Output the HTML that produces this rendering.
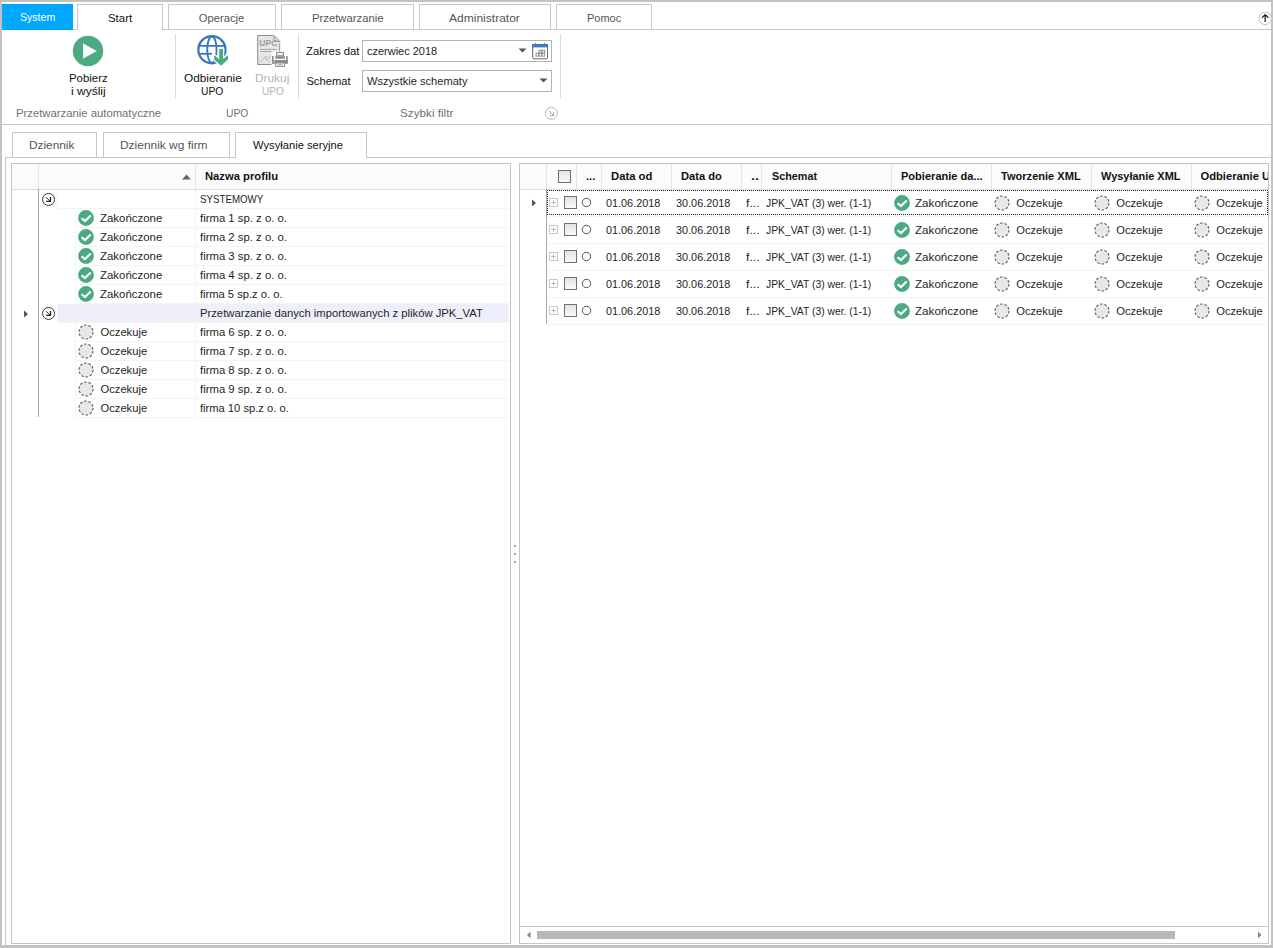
<!DOCTYPE html>
<html><head><meta charset="utf-8"><style>
html,body{margin:0;padding:0;width:1273px;height:948px;overflow:hidden;background:#c3c3c3;font-family:'Liberation Sans', sans-serif;}
svg{overflow:visible}
</style></head><body>
<div style="position:absolute;left:2px;top:2px;width:1269px;height:943px;background:#fff"></div><div style="position:absolute;left:2px;top:29px;width:1269px;height:1px;background:#c8c8c8"></div><div style="position:absolute;left:2px;top:4px;width:71px;height:26px;background:#00a8ff"></div><div style="position:absolute;left:77px;top:4px;width:84px;height:25px;border:1px solid #c8c8c8;border-bottom:none;background:#fff"></div><div style="position:absolute;left:168px;top:4px;width:106px;height:24px;border:1px solid #c8c8c8;border-bottom:none;background:#fff"></div><div style="position:absolute;left:281px;top:4px;width:131px;height:24px;border:1px solid #c8c8c8;border-bottom:none;background:#fff"></div><div style="position:absolute;left:419px;top:4px;width:130px;height:24px;border:1px solid #c8c8c8;border-bottom:none;background:#fff"></div><div style="position:absolute;left:556px;top:4px;width:94px;height:24px;border:1px solid #c8c8c8;border-bottom:none;background:#fff"></div><div style="position:absolute;left:2px;top:124px;width:1269px;height:1px;background:#c8c8c8"></div><div style="position:absolute;left:175px;top:34px;width:1px;height:65px;background:#dcdcdc"></div><div style="position:absolute;left:298px;top:34px;width:1px;height:65px;background:#dcdcdc"></div><div style="position:absolute;left:560px;top:34px;width:1px;height:65px;background:#dcdcdc"></div><svg style="position:absolute;left:72px;top:35px" width="32" height="32" viewBox="0 0 32 32"><circle cx="16" cy="16" r="15.2" fill="#4caa82"/><path d="M11 8.3 L24.8 16 L11 23.8 Z" fill="#f7f8fd"/></svg><svg style="position:absolute;left:195px;top:33px" width="36" height="36" viewBox="0 0 36 36"><g fill="none" stroke="#3a78be">
<circle cx="16.9" cy="16.7" r="13.55" stroke-width="2.3"/>
<ellipse cx="16.9" cy="16.7" rx="4.7" ry="13.2" stroke-width="1.9"/>
<line x1="4.5" y1="12.86" x2="29.5" y2="12.86" stroke-width="1.8"/><line x1="4.5" y1="20.83" x2="17" y2="20.83" stroke-width="1.8"/>
</g>
<path d="M24.2 15.9 L28 15.9 L28 26.3 L33 22 L33 26.6 L26.1 32.8 L19.1 26.6 L19.1 22 L24.2 26.3 Z" fill="#fff" stroke="#fff" stroke-width="2.6" stroke-linejoin="round"/>
<path d="M24.2 15.9 L28 15.9 L28 26.3 L33 22 L33 26.6 L26.1 32.8 L19.1 26.6 L19.1 22 L24.2 26.3 Z" fill="#4caa82"/></svg><svg style="position:absolute;left:255px;top:33px" width="36" height="36" viewBox="0 0 36 36"><path d="M2.7 2.5 L19 2.5 L24.7 8.4 L24.7 31.5 L2.7 31.5 Z" fill="#e6e6e6" stroke="#8c8c8c" stroke-width="1"/>
<text x="4.2" y="13.4" font-family="Liberation Sans" font-size="8.6" font-weight="bold" fill="#9c9c9c">UPO</text>
<path d="M19 2.5 L19 8.4 L24.7 8.4 L24.7 11 L18 11 L18 2.5 Z" fill="#e6e6e6"/>
<path d="M19 2.5 L19 8.4 L24.7 8.4" fill="none" stroke="#8c8c8c" stroke-width="1"/>
<line x1="5.2" y1="16.4" x2="21.4" y2="16.4" stroke="#a0a0a0" stroke-width="0.9"/><line x1="5.2" y1="18.5" x2="16.8" y2="18.5" stroke="#a0a0a0" stroke-width="0.9"/>
<path d="M4.6 29.4 Q8 26 11.5 23 Q9 27 12 26.5 Q14 25.5 15.5 22.5" fill="none" stroke="#b0b0b0" stroke-width="0.9"/>
<path d="M12 27.5 Q14 28.5 15.5 29" fill="none" stroke="#c0c0c0" stroke-width="0.8"/>
<rect x="16.5" y="18.3" width="18.5" height="16.5" fill="#fff"/>
<rect x="21.6" y="19.4" width="6.9" height="3.3" fill="#efefef" stroke="#8c8c8c" stroke-width="1"/>
<rect x="20.2" y="23.2" width="9.7" height="2.5" fill="#8c8c8c"/>
<rect x="17" y="23" width="1.6" height="7.7" fill="#8c8c8c"/><rect x="31.1" y="23" width="1.6" height="7.7" fill="#8c8c8c"/>
<rect x="17" y="27" width="15.7" height="3.7" fill="#8c8c8c"/>
<rect x="18.2" y="28.3" width="1.6" height="1" fill="#fff"/>
<rect x="20.7" y="30" width="8.7" height="3.4" fill="#fff" stroke="#8c8c8c" stroke-width="1"/>
<line x1="22.5" y1="31.8" x2="27.6" y2="31.8" stroke="#8c8c8c" stroke-width="0.8"/></svg><div style="position:absolute;left:362px;top:40px;width:188px;height:20px;border:1px solid #b4b4b4;background:#fff"></div><div style="position:absolute;left:362px;top:70px;width:188px;height:20px;border:1px solid #b4b4b4;background:#fff"></div><svg style="position:absolute;left:518px;top:48px" width="9" height="5" viewBox="0 0 9 5"><path d="M0.5 0.5 L8.5 0.5 L4.5 4.5 Z" fill="#555"/></svg><svg style="position:absolute;left:539px;top:78px" width="9" height="5" viewBox="0 0 9 5"><path d="M0.5 0.5 L8.5 0.5 L4.5 4.5 Z" fill="#555"/></svg><svg style="position:absolute;left:531px;top:42px" width="19" height="19" viewBox="0 0 19 19"><path d="M1.7 2.5 H16.5 V15.5 Q16.5 16.8 15.2 16.8 H3 Q1.7 16.8 1.7 15.5 Z" fill="#fff" stroke="#666" stroke-width="1"/>
<rect x="1.2" y="2" width="15.8" height="3.4" fill="#3d7cc1"/>
<rect x="4" y="1" width="1" height="3" fill="#777"/><rect x="13" y="1" width="1" height="3" fill="#777"/>
<g fill="none" stroke="#8a8a8a" stroke-width="0.9"><rect x="7.9" y="8.3" width="2.9" height="2.9"/><rect x="10.8" y="8.3" width="2.9" height="2.9"/>
<rect x="5" y="11.2" width="2.9" height="2.9"/><rect x="7.9" y="11.2" width="2.9" height="2.9"/><rect x="10.8" y="11.2" width="2.9" height="2.9"/></g></svg><svg style="position:absolute;left:544px;top:106px" width="15" height="15" viewBox="0 0 15 15"><circle cx="7.4" cy="7.3" r="6" fill="#fff" stroke="#b8b8b8" stroke-width="1"/><path d="M4.8 4.8 L9.6 9.6 M9.6 6.2 L9.6 9.6 L6.2 9.6" fill="none" stroke="#a0a0a0" stroke-width="1"/></svg><svg style="position:absolute;left:1257px;top:10px" width="15" height="16" viewBox="0 0 15 16"><circle cx="8.2" cy="8.4" r="6.2" fill="#fff" stroke="#c0c0c0" stroke-width="1"/><path d="M8.2 4.6 L8.2 12 M5 7.8 L8.2 4.6 L11.4 7.8" fill="none" stroke="#222" stroke-width="1.3"/></svg><div style="position:absolute;left:5px;top:157px;width:1266px;height:1px;background:#c6c6c6"></div><div style="position:absolute;left:5px;top:157px;width:1px;height:788px;background:#c6c6c6"></div><div style="position:absolute;left:12px;top:132px;width:83px;height:24px;border:1px solid #c6c6c6;border-bottom:none;background:#fff"></div><div style="position:absolute;left:103px;top:132px;width:125px;height:24px;border:1px solid #c6c6c6;border-bottom:none;background:#fff"></div><div style="position:absolute;left:235px;top:132px;width:130px;height:25px;border:1px solid #c6c6c6;border-bottom:none;background:#fff"></div><div style="position:absolute;left:11px;top:163px;width:498px;height:779px;border:1px solid #c4c4c4;background:#fff"></div><div style="position:absolute;left:12px;top:164px;width:498px;height:25px;background:#fbfbfb"></div><div style="position:absolute;left:12px;top:189px;width:498px;height:1px;background:#dcdcdc"></div><div style="position:absolute;left:38px;top:164px;width:1px;height:25px;background:#e4e4e4"></div><div style="position:absolute;left:195px;top:164px;width:1px;height:25px;background:#e4e4e4"></div><svg style="position:absolute;left:181px;top:173px" width="11" height="8" viewBox="0 0 11 8"><path d="M1 6.5 L5.5 1.5 L10 6.5 Z" fill="#666"/></svg><div style="position:absolute;left:38px;top:189px;width:1px;height:228px;background:#a8a8a8"></div><div style="position:absolute;left:57px;top:208px;width:452px;height:1px;background:#f4f4f4"></div><div style="position:absolute;left:57px;top:190px;width:1px;height:19px;background:#f4f4f4"></div><div style="position:absolute;left:195px;top:190px;width:1px;height:19px;background:#f4f4f4"></div><svg style="position:absolute;left:41px;top:193px" width="14" height="14" viewBox="0 0 14 14"><circle cx="7.55" cy="6.45" r="6" fill="#fff" stroke="#333" stroke-width="1"/><path d="M5.1 4.3 L9.4 8.6" fill="none" stroke="#222" stroke-width="1"/><path d="M5.2 8.4 H9.9 M9.5 4.1 V8.8" fill="none" stroke="#222" stroke-width="1.3"/></svg><div style="position:absolute;left:75px;top:209px;width:1px;height:19px;background:#f2f2f2"></div><div style="position:absolute;left:75px;top:227px;width:434px;height:1px;background:#f4f4f4"></div><div style="position:absolute;left:195px;top:209px;width:1px;height:19px;background:#f2f2f2"></div><svg style="position:absolute;left:78px;top:210px" width="16" height="16" viewBox="0 0 16 16"><circle cx="8" cy="8" r="7.9" fill="#4caa82"/><path d="M3.6 8.2 L7 11.1 L12.7 5.5" fill="none" stroke="#fff" stroke-width="2.1" stroke-linecap="butt" stroke-linejoin="miter"/></svg><div style="position:absolute;left:75px;top:228px;width:1px;height:19px;background:#f2f2f2"></div><div style="position:absolute;left:75px;top:246px;width:434px;height:1px;background:#f4f4f4"></div><div style="position:absolute;left:195px;top:228px;width:1px;height:19px;background:#f2f2f2"></div><svg style="position:absolute;left:78px;top:229px" width="16" height="16" viewBox="0 0 16 16"><circle cx="8" cy="8" r="7.9" fill="#4caa82"/><path d="M3.6 8.2 L7 11.1 L12.7 5.5" fill="none" stroke="#fff" stroke-width="2.1" stroke-linecap="butt" stroke-linejoin="miter"/></svg><div style="position:absolute;left:75px;top:247px;width:1px;height:19px;background:#f2f2f2"></div><div style="position:absolute;left:75px;top:265px;width:434px;height:1px;background:#f4f4f4"></div><div style="position:absolute;left:195px;top:247px;width:1px;height:19px;background:#f2f2f2"></div><svg style="position:absolute;left:78px;top:248px" width="16" height="16" viewBox="0 0 16 16"><circle cx="8" cy="8" r="7.9" fill="#4caa82"/><path d="M3.6 8.2 L7 11.1 L12.7 5.5" fill="none" stroke="#fff" stroke-width="2.1" stroke-linecap="butt" stroke-linejoin="miter"/></svg><div style="position:absolute;left:75px;top:266px;width:1px;height:19px;background:#f2f2f2"></div><div style="position:absolute;left:75px;top:284px;width:434px;height:1px;background:#f4f4f4"></div><div style="position:absolute;left:195px;top:266px;width:1px;height:19px;background:#f2f2f2"></div><svg style="position:absolute;left:78px;top:267px" width="16" height="16" viewBox="0 0 16 16"><circle cx="8" cy="8" r="7.9" fill="#4caa82"/><path d="M3.6 8.2 L7 11.1 L12.7 5.5" fill="none" stroke="#fff" stroke-width="2.1" stroke-linecap="butt" stroke-linejoin="miter"/></svg><div style="position:absolute;left:75px;top:285px;width:1px;height:19px;background:#f2f2f2"></div><div style="position:absolute;left:75px;top:303px;width:434px;height:1px;background:#f4f4f4"></div><div style="position:absolute;left:195px;top:285px;width:1px;height:19px;background:#f2f2f2"></div><svg style="position:absolute;left:78px;top:286px" width="16" height="16" viewBox="0 0 16 16"><circle cx="8" cy="8" r="7.9" fill="#4caa82"/><path d="M3.6 8.2 L7 11.1 L12.7 5.5" fill="none" stroke="#fff" stroke-width="2.1" stroke-linecap="butt" stroke-linejoin="miter"/></svg><div style="position:absolute;left:57px;top:304px;width:452px;height:19px;background:#efeffc"></div><svg style="position:absolute;left:22px;top:310px" width="8" height="9" viewBox="0 0 8 9"><path d="M2 0.5 L6 4 L2 7.5 Z" fill="#555"/></svg><div style="position:absolute;left:57px;top:322px;width:452px;height:1px;background:#f4f4f4"></div><div style="position:absolute;left:57px;top:304px;width:1px;height:19px;background:#f4f4f4"></div><div style="position:absolute;left:195px;top:304px;width:1px;height:19px;background:#f4f4f4"></div><svg style="position:absolute;left:41px;top:307px" width="14" height="14" viewBox="0 0 14 14"><circle cx="7.55" cy="6.45" r="6" fill="#fff" stroke="#333" stroke-width="1"/><path d="M5.1 4.3 L9.4 8.6" fill="none" stroke="#222" stroke-width="1"/><path d="M5.2 8.4 H9.9 M9.5 4.1 V8.8" fill="none" stroke="#222" stroke-width="1.3"/></svg><div style="position:absolute;left:75px;top:323px;width:1px;height:19px;background:#f2f2f2"></div><div style="position:absolute;left:75px;top:341px;width:434px;height:1px;background:#f4f4f4"></div><div style="position:absolute;left:195px;top:323px;width:1px;height:19px;background:#f2f2f2"></div><svg style="position:absolute;left:78px;top:324px" width="16" height="16" viewBox="0 0 16 16"><circle cx="8" cy="8" r="7" fill="#e8e8e8" stroke="#5a5a5a" stroke-width="1.1" stroke-dasharray="2.6 1.8"/></svg><div style="position:absolute;left:75px;top:342px;width:1px;height:19px;background:#f2f2f2"></div><div style="position:absolute;left:75px;top:360px;width:434px;height:1px;background:#f4f4f4"></div><div style="position:absolute;left:195px;top:342px;width:1px;height:19px;background:#f2f2f2"></div><svg style="position:absolute;left:78px;top:343px" width="16" height="16" viewBox="0 0 16 16"><circle cx="8" cy="8" r="7" fill="#e8e8e8" stroke="#5a5a5a" stroke-width="1.1" stroke-dasharray="2.6 1.8"/></svg><div style="position:absolute;left:75px;top:361px;width:1px;height:19px;background:#f2f2f2"></div><div style="position:absolute;left:75px;top:379px;width:434px;height:1px;background:#f4f4f4"></div><div style="position:absolute;left:195px;top:361px;width:1px;height:19px;background:#f2f2f2"></div><svg style="position:absolute;left:78px;top:362px" width="16" height="16" viewBox="0 0 16 16"><circle cx="8" cy="8" r="7" fill="#e8e8e8" stroke="#5a5a5a" stroke-width="1.1" stroke-dasharray="2.6 1.8"/></svg><div style="position:absolute;left:75px;top:380px;width:1px;height:19px;background:#f2f2f2"></div><div style="position:absolute;left:75px;top:398px;width:434px;height:1px;background:#f4f4f4"></div><div style="position:absolute;left:195px;top:380px;width:1px;height:19px;background:#f2f2f2"></div><svg style="position:absolute;left:78px;top:381px" width="16" height="16" viewBox="0 0 16 16"><circle cx="8" cy="8" r="7" fill="#e8e8e8" stroke="#5a5a5a" stroke-width="1.1" stroke-dasharray="2.6 1.8"/></svg><div style="position:absolute;left:75px;top:399px;width:1px;height:19px;background:#f2f2f2"></div><div style="position:absolute;left:75px;top:417px;width:434px;height:1px;background:#f4f4f4"></div><div style="position:absolute;left:195px;top:399px;width:1px;height:19px;background:#f2f2f2"></div><svg style="position:absolute;left:78px;top:400px" width="16" height="16" viewBox="0 0 16 16"><circle cx="8" cy="8" r="7" fill="#e8e8e8" stroke="#5a5a5a" stroke-width="1.1" stroke-dasharray="2.6 1.8"/></svg><div style="position:absolute;left:519px;top:163px;width:748px;height:779px;border:1px solid #c4c4c4;background:#fff"></div><div style="position:absolute;left:520px;top:164px;width:748px;height:25px;background:#fbfbfb"></div><div style="position:absolute;left:520px;top:189px;width:748px;height:1px;background:#dcdcdc"></div><div style="position:absolute;left:546px;top:164px;width:1px;height:25px;background:#e4e4e4"></div><div style="position:absolute;left:576px;top:164px;width:1px;height:25px;background:#e4e4e4"></div><div style="position:absolute;left:601px;top:164px;width:1px;height:25px;background:#e4e4e4"></div><div style="position:absolute;left:671px;top:164px;width:1px;height:25px;background:#e4e4e4"></div><div style="position:absolute;left:741px;top:164px;width:1px;height:25px;background:#e4e4e4"></div><div style="position:absolute;left:761px;top:164px;width:1px;height:25px;background:#e4e4e4"></div><div style="position:absolute;left:891px;top:164px;width:1px;height:25px;background:#e4e4e4"></div><div style="position:absolute;left:991px;top:164px;width:1px;height:25px;background:#e4e4e4"></div><div style="position:absolute;left:1091px;top:164px;width:1px;height:25px;background:#e4e4e4"></div><div style="position:absolute;left:1191px;top:164px;width:1px;height:25px;background:#e4e4e4"></div><svg style="position:absolute;left:557px;top:169px" width="15" height="15" viewBox="0 0 15 15"><defs><linearGradient id="cg" x1="0" y1="0" x2="0" y2="1"><stop offset="0" stop-color="#e2e2e2"/><stop offset="1" stop-color="#fafafa"/></linearGradient></defs><rect x="1.5" y="1.5" width="12" height="12" fill="url(#cg)" stroke="#707070" stroke-width="1"/></svg><div style="position:absolute;left:546px;top:189px;width:1px;height:135px;background:#a8a8a8"></div><div style="position:absolute;left:547px;top:216px;width:721px;height:1px;background:#f4f4f4"></div><svg style="position:absolute;left:530px;top:199px" width="8" height="9" viewBox="0 0 8 9"><path d="M2 0.5 L6 4 L2 7.5 Z" fill="#555"/></svg><svg style="position:absolute;left:548px;top:197px" width="11" height="11" viewBox="0 0 11 11"><rect x="1.5" y="1.5" width="8" height="8" fill="#fff" stroke="#c8c8c8" stroke-width="1"/><path d="M5.5 3.3 V7.7 M3.3 5.5 H7.7" stroke="#b8b8b8" stroke-width="1"/></svg><svg style="position:absolute;left:563px;top:195px" width="15" height="15" viewBox="0 0 15 15"><rect x="1.5" y="1.5" width="12" height="12" fill="url(#cg)" stroke="#707070" stroke-width="1"/></svg><svg style="position:absolute;left:581px;top:197px" width="11" height="11" viewBox="0 0 11 11"><circle cx="5.5" cy="5.5" r="4.2" fill="#fff" stroke="#555" stroke-width="1"/></svg><svg style="position:absolute;left:894px;top:195px" width="16" height="16" viewBox="0 0 16 16"><circle cx="8" cy="8" r="7.9" fill="#4caa82"/><path d="M3.6 8.2 L7 11.1 L12.7 5.5" fill="none" stroke="#fff" stroke-width="2.1" stroke-linecap="butt" stroke-linejoin="miter"/></svg><svg style="position:absolute;left:994px;top:195px" width="16" height="16" viewBox="0 0 16 16"><circle cx="8" cy="8" r="7" fill="#e8e8e8" stroke="#5a5a5a" stroke-width="1.1" stroke-dasharray="2.6 1.8"/></svg><svg style="position:absolute;left:1094px;top:195px" width="16" height="16" viewBox="0 0 16 16"><circle cx="8" cy="8" r="7" fill="#e8e8e8" stroke="#5a5a5a" stroke-width="1.1" stroke-dasharray="2.6 1.8"/></svg><svg style="position:absolute;left:1194px;top:195px" width="16" height="16" viewBox="0 0 16 16"><circle cx="8" cy="8" r="7" fill="#e8e8e8" stroke="#5a5a5a" stroke-width="1.1" stroke-dasharray="2.6 1.8"/></svg><div style="position:absolute;left:547px;top:243px;width:721px;height:1px;background:#f4f4f4"></div><svg style="position:absolute;left:548px;top:224px" width="11" height="11" viewBox="0 0 11 11"><rect x="1.5" y="1.5" width="8" height="8" fill="#fff" stroke="#c8c8c8" stroke-width="1"/><path d="M5.5 3.3 V7.7 M3.3 5.5 H7.7" stroke="#b8b8b8" stroke-width="1"/></svg><svg style="position:absolute;left:563px;top:222px" width="15" height="15" viewBox="0 0 15 15"><rect x="1.5" y="1.5" width="12" height="12" fill="url(#cg)" stroke="#707070" stroke-width="1"/></svg><svg style="position:absolute;left:581px;top:224px" width="11" height="11" viewBox="0 0 11 11"><circle cx="5.5" cy="5.5" r="4.2" fill="#fff" stroke="#555" stroke-width="1"/></svg><svg style="position:absolute;left:894px;top:222px" width="16" height="16" viewBox="0 0 16 16"><circle cx="8" cy="8" r="7.9" fill="#4caa82"/><path d="M3.6 8.2 L7 11.1 L12.7 5.5" fill="none" stroke="#fff" stroke-width="2.1" stroke-linecap="butt" stroke-linejoin="miter"/></svg><svg style="position:absolute;left:994px;top:222px" width="16" height="16" viewBox="0 0 16 16"><circle cx="8" cy="8" r="7" fill="#e8e8e8" stroke="#5a5a5a" stroke-width="1.1" stroke-dasharray="2.6 1.8"/></svg><svg style="position:absolute;left:1094px;top:222px" width="16" height="16" viewBox="0 0 16 16"><circle cx="8" cy="8" r="7" fill="#e8e8e8" stroke="#5a5a5a" stroke-width="1.1" stroke-dasharray="2.6 1.8"/></svg><svg style="position:absolute;left:1194px;top:222px" width="16" height="16" viewBox="0 0 16 16"><circle cx="8" cy="8" r="7" fill="#e8e8e8" stroke="#5a5a5a" stroke-width="1.1" stroke-dasharray="2.6 1.8"/></svg><div style="position:absolute;left:547px;top:270px;width:721px;height:1px;background:#f4f4f4"></div><svg style="position:absolute;left:548px;top:251px" width="11" height="11" viewBox="0 0 11 11"><rect x="1.5" y="1.5" width="8" height="8" fill="#fff" stroke="#c8c8c8" stroke-width="1"/><path d="M5.5 3.3 V7.7 M3.3 5.5 H7.7" stroke="#b8b8b8" stroke-width="1"/></svg><svg style="position:absolute;left:563px;top:249px" width="15" height="15" viewBox="0 0 15 15"><rect x="1.5" y="1.5" width="12" height="12" fill="url(#cg)" stroke="#707070" stroke-width="1"/></svg><svg style="position:absolute;left:581px;top:251px" width="11" height="11" viewBox="0 0 11 11"><circle cx="5.5" cy="5.5" r="4.2" fill="#fff" stroke="#555" stroke-width="1"/></svg><svg style="position:absolute;left:894px;top:249px" width="16" height="16" viewBox="0 0 16 16"><circle cx="8" cy="8" r="7.9" fill="#4caa82"/><path d="M3.6 8.2 L7 11.1 L12.7 5.5" fill="none" stroke="#fff" stroke-width="2.1" stroke-linecap="butt" stroke-linejoin="miter"/></svg><svg style="position:absolute;left:994px;top:249px" width="16" height="16" viewBox="0 0 16 16"><circle cx="8" cy="8" r="7" fill="#e8e8e8" stroke="#5a5a5a" stroke-width="1.1" stroke-dasharray="2.6 1.8"/></svg><svg style="position:absolute;left:1094px;top:249px" width="16" height="16" viewBox="0 0 16 16"><circle cx="8" cy="8" r="7" fill="#e8e8e8" stroke="#5a5a5a" stroke-width="1.1" stroke-dasharray="2.6 1.8"/></svg><svg style="position:absolute;left:1194px;top:249px" width="16" height="16" viewBox="0 0 16 16"><circle cx="8" cy="8" r="7" fill="#e8e8e8" stroke="#5a5a5a" stroke-width="1.1" stroke-dasharray="2.6 1.8"/></svg><div style="position:absolute;left:547px;top:297px;width:721px;height:1px;background:#f4f4f4"></div><svg style="position:absolute;left:548px;top:278px" width="11" height="11" viewBox="0 0 11 11"><rect x="1.5" y="1.5" width="8" height="8" fill="#fff" stroke="#c8c8c8" stroke-width="1"/><path d="M5.5 3.3 V7.7 M3.3 5.5 H7.7" stroke="#b8b8b8" stroke-width="1"/></svg><svg style="position:absolute;left:563px;top:276px" width="15" height="15" viewBox="0 0 15 15"><rect x="1.5" y="1.5" width="12" height="12" fill="url(#cg)" stroke="#707070" stroke-width="1"/></svg><svg style="position:absolute;left:581px;top:278px" width="11" height="11" viewBox="0 0 11 11"><circle cx="5.5" cy="5.5" r="4.2" fill="#fff" stroke="#555" stroke-width="1"/></svg><svg style="position:absolute;left:894px;top:276px" width="16" height="16" viewBox="0 0 16 16"><circle cx="8" cy="8" r="7.9" fill="#4caa82"/><path d="M3.6 8.2 L7 11.1 L12.7 5.5" fill="none" stroke="#fff" stroke-width="2.1" stroke-linecap="butt" stroke-linejoin="miter"/></svg><svg style="position:absolute;left:994px;top:276px" width="16" height="16" viewBox="0 0 16 16"><circle cx="8" cy="8" r="7" fill="#e8e8e8" stroke="#5a5a5a" stroke-width="1.1" stroke-dasharray="2.6 1.8"/></svg><svg style="position:absolute;left:1094px;top:276px" width="16" height="16" viewBox="0 0 16 16"><circle cx="8" cy="8" r="7" fill="#e8e8e8" stroke="#5a5a5a" stroke-width="1.1" stroke-dasharray="2.6 1.8"/></svg><svg style="position:absolute;left:1194px;top:276px" width="16" height="16" viewBox="0 0 16 16"><circle cx="8" cy="8" r="7" fill="#e8e8e8" stroke="#5a5a5a" stroke-width="1.1" stroke-dasharray="2.6 1.8"/></svg><div style="position:absolute;left:547px;top:324px;width:721px;height:1px;background:#f4f4f4"></div><svg style="position:absolute;left:548px;top:305px" width="11" height="11" viewBox="0 0 11 11"><rect x="1.5" y="1.5" width="8" height="8" fill="#fff" stroke="#c8c8c8" stroke-width="1"/><path d="M5.5 3.3 V7.7 M3.3 5.5 H7.7" stroke="#b8b8b8" stroke-width="1"/></svg><svg style="position:absolute;left:563px;top:303px" width="15" height="15" viewBox="0 0 15 15"><rect x="1.5" y="1.5" width="12" height="12" fill="url(#cg)" stroke="#707070" stroke-width="1"/></svg><svg style="position:absolute;left:581px;top:305px" width="11" height="11" viewBox="0 0 11 11"><circle cx="5.5" cy="5.5" r="4.2" fill="#fff" stroke="#555" stroke-width="1"/></svg><svg style="position:absolute;left:894px;top:303px" width="16" height="16" viewBox="0 0 16 16"><circle cx="8" cy="8" r="7.9" fill="#4caa82"/><path d="M3.6 8.2 L7 11.1 L12.7 5.5" fill="none" stroke="#fff" stroke-width="2.1" stroke-linecap="butt" stroke-linejoin="miter"/></svg><svg style="position:absolute;left:994px;top:303px" width="16" height="16" viewBox="0 0 16 16"><circle cx="8" cy="8" r="7" fill="#e8e8e8" stroke="#5a5a5a" stroke-width="1.1" stroke-dasharray="2.6 1.8"/></svg><svg style="position:absolute;left:1094px;top:303px" width="16" height="16" viewBox="0 0 16 16"><circle cx="8" cy="8" r="7" fill="#e8e8e8" stroke="#5a5a5a" stroke-width="1.1" stroke-dasharray="2.6 1.8"/></svg><svg style="position:absolute;left:1194px;top:303px" width="16" height="16" viewBox="0 0 16 16"><circle cx="8" cy="8" r="7" fill="#e8e8e8" stroke="#5a5a5a" stroke-width="1.1" stroke-dasharray="2.6 1.8"/></svg><div style="position:absolute;left:547px;top:190px;width:721px;height:25px;border:1px dotted #222;box-sizing:border-box"></div><div style="position:absolute;left:520px;top:926px;width:748px;height:1px;background:#c8c8c8"></div><div style="position:absolute;left:537px;top:931px;width:638px;height:8px;background:#b8b8b8"></div><svg style="position:absolute;left:526px;top:931px" width="6" height="8" viewBox="0 0 6 8"><path d="M4.5 0.5 L1 4 L4.5 7.5 Z" fill="#888"/></svg><svg style="position:absolute;left:1257px;top:931px" width="6" height="8" viewBox="0 0 6 8"><path d="M1 0.5 L4.5 4 L1 7.5 Z" fill="#888"/></svg><div style="position:absolute;left:510px;top:157px;width:1px;height:788px;background:transparent"></div><div style="position:absolute;left:514px;top:545px;width:2px;height:2px;background:#a0a0a0"></div><div style="position:absolute;left:514px;top:553px;width:2px;height:2px;background:#a0a0a0"></div><div style="position:absolute;left:514px;top:561px;width:2px;height:2px;background:#a0a0a0"></div>
<div style="position:absolute;left:19.70px;top:12.00px;font-size:11.2px;font-weight:400;color:#ffffff;line-height:1;white-space:pre;transform-origin:0 0;transform:scaleX(0.9446);">System</div><div style="position:absolute;left:108.10px;top:13.00px;font-size:11.2px;font-weight:400;color:#111;line-height:1;white-space:pre;transform-origin:0 0;transform:scaleX(1.0203);">Start</div><div style="position:absolute;left:198.80px;top:13.00px;font-size:11.2px;font-weight:400;color:#555;line-height:1;white-space:pre;transform-origin:0 0;">Operacje</div><div style="position:absolute;left:311.80px;top:13.00px;font-size:11.2px;font-weight:400;color:#555;line-height:1;white-space:pre;transform-origin:0 0;transform:scaleX(1.0087);">Przetwarzanie</div><div style="position:absolute;left:449.40px;top:13.00px;font-size:11.2px;font-weight:400;color:#555;line-height:1;white-space:pre;transform-origin:0 0;transform:scaleX(1.0754);">Administrator</div><div style="position:absolute;left:587.30px;top:13.00px;font-size:11.2px;font-weight:400;color:#555;line-height:1;white-space:pre;transform-origin:0 0;transform:scaleX(0.9814);">Pomoc</div><div style="position:absolute;left:69.10px;top:73.00px;font-size:11.2px;font-weight:400;color:#111;line-height:1;white-space:pre;transform-origin:0 0;transform:scaleX(1.0179);">Pobierz</div><div style="position:absolute;left:70.90px;top:86.00px;font-size:11.2px;font-weight:400;color:#111;line-height:1;white-space:pre;transform-origin:0 0;transform:scaleX(1.0725);">i wyślij</div><div style="position:absolute;left:184.30px;top:73.00px;font-size:11.2px;font-weight:400;color:#111;line-height:1;white-space:pre;transform-origin:0 0;transform:scaleX(1.0552);">Odbieranie</div><div style="position:absolute;left:201.20px;top:86.00px;font-size:11.2px;font-weight:400;color:#111;line-height:1;white-space:pre;transform-origin:0 0;transform:scaleX(0.9204);">UPO</div><div style="position:absolute;left:255.30px;top:73.00px;font-size:11.2px;font-weight:400;color:#b4b4bc;line-height:1;white-space:pre;transform-origin:0 0;transform:scaleX(1.0598);">Drukuj</div><div style="position:absolute;left:261.50px;top:86.00px;font-size:11.2px;font-weight:400;color:#b4b4bc;line-height:1;white-space:pre;transform-origin:0 0;transform:scaleX(0.9032);">UPO</div><div style="position:absolute;left:306.40px;top:46.00px;font-size:11.2px;font-weight:400;color:#111;line-height:1;white-space:pre;transform-origin:0 0;transform:scaleX(1.0104);">Zakres dat</div><div style="position:absolute;left:306.40px;top:76.00px;font-size:11.2px;font-weight:400;color:#111;line-height:1;white-space:pre;transform-origin:0 0;">Schemat</div><div style="position:absolute;left:367.20px;top:46.00px;font-size:11.2px;font-weight:400;color:#1e1e1e;line-height:1;white-space:pre;transform-origin:0 0;transform:scaleX(0.9813);">czerwiec 2018</div><div style="position:absolute;left:366.50px;top:76.00px;font-size:11.2px;font-weight:400;color:#1e1e1e;line-height:1;white-space:pre;transform-origin:0 0;transform:scaleX(0.9917);">Wszystkie schematy</div><div style="position:absolute;left:16.00px;top:108.00px;font-size:11.2px;font-weight:400;color:#707070;line-height:1;white-space:pre;transform-origin:0 0;transform:scaleX(1.0095);">Przetwarzanie automatyczne</div><div style="position:absolute;left:226.40px;top:108.00px;font-size:11.2px;font-weight:400;color:#707070;line-height:1;white-space:pre;transform-origin:0 0;transform:scaleX(0.9247);">UPO</div><div style="position:absolute;left:400.00px;top:108.00px;font-size:11.2px;font-weight:400;color:#707070;line-height:1;white-space:pre;transform-origin:0 0;transform:scaleX(1.0463);">Szybki filtr</div><div style="position:absolute;left:29.20px;top:140.00px;font-size:11.2px;font-weight:400;color:#555;line-height:1;white-space:pre;transform-origin:0 0;transform:scaleX(1.0571);">Dziennik</div><div style="position:absolute;left:120.00px;top:140.00px;font-size:11.2px;font-weight:400;color:#555;line-height:1;white-space:pre;transform-origin:0 0;transform:scaleX(1.0671);">Dziennik wg firm</div><div style="position:absolute;left:253.00px;top:140.00px;font-size:11.2px;font-weight:400;color:#111;line-height:1;white-space:pre;transform-origin:0 0;">Wysyłanie seryjne</div><div style="position:absolute;left:205.00px;top:171.00px;font-size:11.2px;font-weight:700;color:#111;line-height:1;white-space:pre;transform-origin:0 0;transform:scaleX(1.0051);">Nazwa profilu</div><div style="position:absolute;left:199.90px;top:194.00px;font-size:11.2px;font-weight:400;color:#1e1e1e;line-height:1;white-space:pre;transform-origin:0 0;transform:scaleX(0.8699);">SYSTEMOWY</div><div style="position:absolute;left:99.50px;top:213.00px;font-size:11.2px;font-weight:400;color:#1e1e1e;line-height:1;white-space:pre;transform-origin:0 0;transform:scaleX(1.0225);">Zakończone</div><div style="position:absolute;left:199.90px;top:213.00px;font-size:11.2px;font-weight:400;color:#1e1e1e;line-height:1;white-space:pre;transform-origin:0 0;transform:scaleX(1.0140);">firma 1 sp. z o. o.</div><div style="position:absolute;left:99.50px;top:232.00px;font-size:11.2px;font-weight:400;color:#1e1e1e;line-height:1;white-space:pre;transform-origin:0 0;transform:scaleX(1.0225);">Zakończone</div><div style="position:absolute;left:199.90px;top:232.00px;font-size:11.2px;font-weight:400;color:#1e1e1e;line-height:1;white-space:pre;transform-origin:0 0;transform:scaleX(1.0140);">firma 2 sp. z o. o.</div><div style="position:absolute;left:99.50px;top:251.00px;font-size:11.2px;font-weight:400;color:#1e1e1e;line-height:1;white-space:pre;transform-origin:0 0;transform:scaleX(1.0225);">Zakończone</div><div style="position:absolute;left:199.90px;top:251.00px;font-size:11.2px;font-weight:400;color:#1e1e1e;line-height:1;white-space:pre;transform-origin:0 0;transform:scaleX(1.0140);">firma 3 sp. z o. o.</div><div style="position:absolute;left:99.50px;top:270.00px;font-size:11.2px;font-weight:400;color:#1e1e1e;line-height:1;white-space:pre;transform-origin:0 0;transform:scaleX(1.0225);">Zakończone</div><div style="position:absolute;left:199.90px;top:270.00px;font-size:11.2px;font-weight:400;color:#1e1e1e;line-height:1;white-space:pre;transform-origin:0 0;transform:scaleX(1.0140);">firma 4 sp. z o. o.</div><div style="position:absolute;left:99.50px;top:289.00px;font-size:11.2px;font-weight:400;color:#1e1e1e;line-height:1;white-space:pre;transform-origin:0 0;transform:scaleX(1.0225);">Zakończone</div><div style="position:absolute;left:199.90px;top:289.00px;font-size:11.2px;font-weight:400;color:#1e1e1e;line-height:1;white-space:pre;transform-origin:0 0;">firma 5 sp.z o. o.</div><div style="position:absolute;left:199.90px;top:308.00px;font-size:11.2px;font-weight:400;color:#1e1e1e;line-height:1;white-space:pre;transform-origin:0 0;transform:scaleX(1.0055);">Przetwarzanie danych importowanych z plików JPK_VAT</div><div style="position:absolute;left:100.50px;top:327.00px;font-size:11.2px;font-weight:400;color:#1e1e1e;line-height:1;white-space:pre;transform-origin:0 0;">Oczekuje</div><div style="position:absolute;left:199.90px;top:327.00px;font-size:11.2px;font-weight:400;color:#1e1e1e;line-height:1;white-space:pre;transform-origin:0 0;transform:scaleX(1.0140);">firma 6 sp. z o. o.</div><div style="position:absolute;left:100.50px;top:346.00px;font-size:11.2px;font-weight:400;color:#1e1e1e;line-height:1;white-space:pre;transform-origin:0 0;">Oczekuje</div><div style="position:absolute;left:199.90px;top:346.00px;font-size:11.2px;font-weight:400;color:#1e1e1e;line-height:1;white-space:pre;transform-origin:0 0;transform:scaleX(1.0140);">firma 7 sp. z o. o.</div><div style="position:absolute;left:100.50px;top:365.00px;font-size:11.2px;font-weight:400;color:#1e1e1e;line-height:1;white-space:pre;transform-origin:0 0;">Oczekuje</div><div style="position:absolute;left:199.90px;top:365.00px;font-size:11.2px;font-weight:400;color:#1e1e1e;line-height:1;white-space:pre;transform-origin:0 0;transform:scaleX(1.0140);">firma 8 sp. z o. o.</div><div style="position:absolute;left:100.50px;top:384.00px;font-size:11.2px;font-weight:400;color:#1e1e1e;line-height:1;white-space:pre;transform-origin:0 0;">Oczekuje</div><div style="position:absolute;left:199.90px;top:384.00px;font-size:11.2px;font-weight:400;color:#1e1e1e;line-height:1;white-space:pre;transform-origin:0 0;transform:scaleX(1.0140);">firma 9 sp. z o. o.</div><div style="position:absolute;left:100.50px;top:403.00px;font-size:11.2px;font-weight:400;color:#1e1e1e;line-height:1;white-space:pre;transform-origin:0 0;">Oczekuje</div><div style="position:absolute;left:199.90px;top:403.00px;font-size:11.2px;font-weight:400;color:#1e1e1e;line-height:1;white-space:pre;transform-origin:0 0;">firma 10 sp.z o. o.</div><div style="position:absolute;left:586.00px;top:171.00px;font-size:11.2px;font-weight:700;color:#111;line-height:1;white-space:pre;transform-origin:0 0;">...</div><div style="position:absolute;left:610.80px;top:171.00px;font-size:11.2px;font-weight:700;color:#111;line-height:1;white-space:pre;transform-origin:0 0;transform:scaleX(1.0067);">Data od</div><div style="position:absolute;left:681.30px;top:171.00px;font-size:11.2px;font-weight:700;color:#111;line-height:1;white-space:pre;transform-origin:0 0;transform:scaleX(0.9942);">Data do</div><div style="position:absolute;left:751.00px;top:171.00px;font-size:11.2px;font-weight:700;color:#111;line-height:1;white-space:pre;transform-origin:0 0;transform:scaleX(1.2838);">..</div><div style="position:absolute;left:771.60px;top:171.00px;font-size:11.2px;font-weight:700;color:#111;line-height:1;white-space:pre;transform-origin:0 0;transform:scaleX(0.9662);">Schemat</div><div style="position:absolute;left:900.90px;top:171.00px;font-size:11.2px;font-weight:700;color:#111;line-height:1;white-space:pre;transform-origin:0 0;transform:scaleX(0.9877);">Pobieranie da...</div><div style="position:absolute;left:1000.80px;top:171.00px;font-size:11.2px;font-weight:700;color:#111;line-height:1;white-space:pre;transform-origin:0 0;transform:scaleX(0.9886);">Tworzenie XML</div><div style="position:absolute;left:1101.00px;top:171.00px;font-size:11.2px;font-weight:700;color:#111;line-height:1;white-space:pre;transform-origin:0 0;transform:scaleX(0.9782);">Wysyłanie XML</div><div style="position:absolute;left:1200.50px;top:169.00px;width:67.50px;height:16px;overflow:hidden"><div style="position:absolute;left:0;top:2px;font-size:11.2px;font-weight:700;color:#111;line-height:1;white-space:pre;transform-origin:0 0;">Odbieranie UPO</div></div><div style="position:absolute;left:605.90px;top:198.00px;font-size:11.2px;font-weight:400;color:#1e1e1e;line-height:1;white-space:pre;transform-origin:0 0;transform:scaleX(0.9691);">01.06.2018</div><div style="position:absolute;left:675.90px;top:198.00px;font-size:11.2px;font-weight:400;color:#1e1e1e;line-height:1;white-space:pre;transform-origin:0 0;transform:scaleX(0.9709);">30.06.2018</div><div style="position:absolute;left:746.30px;top:198.00px;font-size:11.2px;font-weight:400;color:#1e1e1e;line-height:1;white-space:pre;transform-origin:0 0;transform:scaleX(1.0929);">f...</div><div style="position:absolute;left:765.50px;top:198.00px;font-size:11.2px;font-weight:400;color:#1e1e1e;line-height:1;white-space:pre;transform-origin:0 0;transform:scaleX(0.9248);">JPK_VAT (3) wer. (1-1)</div><div style="position:absolute;left:915.00px;top:198.00px;font-size:11.2px;font-weight:400;color:#1e1e1e;line-height:1;white-space:pre;transform-origin:0 0;transform:scaleX(1.0391);">Zakończone</div><div style="position:absolute;left:1016.20px;top:198.00px;font-size:11.2px;font-weight:400;color:#1e1e1e;line-height:1;white-space:pre;transform-origin:0 0;">Oczekuje</div><div style="position:absolute;left:1116.20px;top:198.00px;font-size:11.2px;font-weight:400;color:#1e1e1e;line-height:1;white-space:pre;transform-origin:0 0;">Oczekuje</div><div style="position:absolute;left:1216.20px;top:198.00px;font-size:11.2px;font-weight:400;color:#1e1e1e;line-height:1;white-space:pre;transform-origin:0 0;">Oczekuje</div><div style="position:absolute;left:605.90px;top:225.00px;font-size:11.2px;font-weight:400;color:#1e1e1e;line-height:1;white-space:pre;transform-origin:0 0;transform:scaleX(0.9691);">01.06.2018</div><div style="position:absolute;left:675.90px;top:225.00px;font-size:11.2px;font-weight:400;color:#1e1e1e;line-height:1;white-space:pre;transform-origin:0 0;transform:scaleX(0.9709);">30.06.2018</div><div style="position:absolute;left:746.30px;top:225.00px;font-size:11.2px;font-weight:400;color:#1e1e1e;line-height:1;white-space:pre;transform-origin:0 0;transform:scaleX(1.0929);">f...</div><div style="position:absolute;left:765.50px;top:225.00px;font-size:11.2px;font-weight:400;color:#1e1e1e;line-height:1;white-space:pre;transform-origin:0 0;transform:scaleX(0.9248);">JPK_VAT (3) wer. (1-1)</div><div style="position:absolute;left:915.00px;top:225.00px;font-size:11.2px;font-weight:400;color:#1e1e1e;line-height:1;white-space:pre;transform-origin:0 0;transform:scaleX(1.0391);">Zakończone</div><div style="position:absolute;left:1016.20px;top:225.00px;font-size:11.2px;font-weight:400;color:#1e1e1e;line-height:1;white-space:pre;transform-origin:0 0;">Oczekuje</div><div style="position:absolute;left:1116.20px;top:225.00px;font-size:11.2px;font-weight:400;color:#1e1e1e;line-height:1;white-space:pre;transform-origin:0 0;">Oczekuje</div><div style="position:absolute;left:1216.20px;top:225.00px;font-size:11.2px;font-weight:400;color:#1e1e1e;line-height:1;white-space:pre;transform-origin:0 0;">Oczekuje</div><div style="position:absolute;left:605.90px;top:252.00px;font-size:11.2px;font-weight:400;color:#1e1e1e;line-height:1;white-space:pre;transform-origin:0 0;transform:scaleX(0.9691);">01.06.2018</div><div style="position:absolute;left:675.90px;top:252.00px;font-size:11.2px;font-weight:400;color:#1e1e1e;line-height:1;white-space:pre;transform-origin:0 0;transform:scaleX(0.9709);">30.06.2018</div><div style="position:absolute;left:746.30px;top:252.00px;font-size:11.2px;font-weight:400;color:#1e1e1e;line-height:1;white-space:pre;transform-origin:0 0;transform:scaleX(1.0929);">f...</div><div style="position:absolute;left:765.50px;top:252.00px;font-size:11.2px;font-weight:400;color:#1e1e1e;line-height:1;white-space:pre;transform-origin:0 0;transform:scaleX(0.9248);">JPK_VAT (3) wer. (1-1)</div><div style="position:absolute;left:915.00px;top:252.00px;font-size:11.2px;font-weight:400;color:#1e1e1e;line-height:1;white-space:pre;transform-origin:0 0;transform:scaleX(1.0391);">Zakończone</div><div style="position:absolute;left:1016.20px;top:252.00px;font-size:11.2px;font-weight:400;color:#1e1e1e;line-height:1;white-space:pre;transform-origin:0 0;">Oczekuje</div><div style="position:absolute;left:1116.20px;top:252.00px;font-size:11.2px;font-weight:400;color:#1e1e1e;line-height:1;white-space:pre;transform-origin:0 0;">Oczekuje</div><div style="position:absolute;left:1216.20px;top:252.00px;font-size:11.2px;font-weight:400;color:#1e1e1e;line-height:1;white-space:pre;transform-origin:0 0;">Oczekuje</div><div style="position:absolute;left:605.90px;top:279.00px;font-size:11.2px;font-weight:400;color:#1e1e1e;line-height:1;white-space:pre;transform-origin:0 0;transform:scaleX(0.9691);">01.06.2018</div><div style="position:absolute;left:675.90px;top:279.00px;font-size:11.2px;font-weight:400;color:#1e1e1e;line-height:1;white-space:pre;transform-origin:0 0;transform:scaleX(0.9709);">30.06.2018</div><div style="position:absolute;left:746.30px;top:279.00px;font-size:11.2px;font-weight:400;color:#1e1e1e;line-height:1;white-space:pre;transform-origin:0 0;transform:scaleX(1.0929);">f...</div><div style="position:absolute;left:765.50px;top:279.00px;font-size:11.2px;font-weight:400;color:#1e1e1e;line-height:1;white-space:pre;transform-origin:0 0;transform:scaleX(0.9248);">JPK_VAT (3) wer. (1-1)</div><div style="position:absolute;left:915.00px;top:279.00px;font-size:11.2px;font-weight:400;color:#1e1e1e;line-height:1;white-space:pre;transform-origin:0 0;transform:scaleX(1.0391);">Zakończone</div><div style="position:absolute;left:1016.20px;top:279.00px;font-size:11.2px;font-weight:400;color:#1e1e1e;line-height:1;white-space:pre;transform-origin:0 0;">Oczekuje</div><div style="position:absolute;left:1116.20px;top:279.00px;font-size:11.2px;font-weight:400;color:#1e1e1e;line-height:1;white-space:pre;transform-origin:0 0;">Oczekuje</div><div style="position:absolute;left:1216.20px;top:279.00px;font-size:11.2px;font-weight:400;color:#1e1e1e;line-height:1;white-space:pre;transform-origin:0 0;">Oczekuje</div><div style="position:absolute;left:605.90px;top:306.00px;font-size:11.2px;font-weight:400;color:#1e1e1e;line-height:1;white-space:pre;transform-origin:0 0;transform:scaleX(0.9691);">01.06.2018</div><div style="position:absolute;left:675.90px;top:306.00px;font-size:11.2px;font-weight:400;color:#1e1e1e;line-height:1;white-space:pre;transform-origin:0 0;transform:scaleX(0.9709);">30.06.2018</div><div style="position:absolute;left:746.30px;top:306.00px;font-size:11.2px;font-weight:400;color:#1e1e1e;line-height:1;white-space:pre;transform-origin:0 0;transform:scaleX(1.0929);">f...</div><div style="position:absolute;left:765.50px;top:306.00px;font-size:11.2px;font-weight:400;color:#1e1e1e;line-height:1;white-space:pre;transform-origin:0 0;transform:scaleX(0.9248);">JPK_VAT (3) wer. (1-1)</div><div style="position:absolute;left:915.00px;top:306.00px;font-size:11.2px;font-weight:400;color:#1e1e1e;line-height:1;white-space:pre;transform-origin:0 0;transform:scaleX(1.0391);">Zakończone</div><div style="position:absolute;left:1016.20px;top:306.00px;font-size:11.2px;font-weight:400;color:#1e1e1e;line-height:1;white-space:pre;transform-origin:0 0;">Oczekuje</div><div style="position:absolute;left:1116.20px;top:306.00px;font-size:11.2px;font-weight:400;color:#1e1e1e;line-height:1;white-space:pre;transform-origin:0 0;">Oczekuje</div><div style="position:absolute;left:1216.20px;top:306.00px;font-size:11.2px;font-weight:400;color:#1e1e1e;line-height:1;white-space:pre;transform-origin:0 0;">Oczekuje</div>
</body></html>
